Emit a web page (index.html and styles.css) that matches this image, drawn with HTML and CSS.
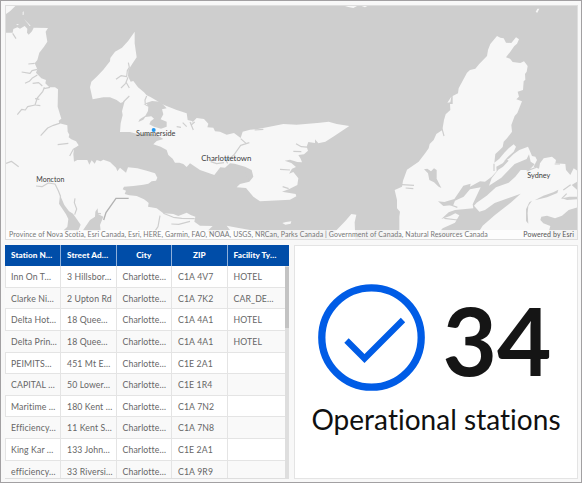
FILE: index.html
```html
<!DOCTYPE html>
<html lang="en">
<head>
<meta charset="utf-8">
<title>Operational stations</title>
<link rel="stylesheet" href="styles.css">
</head>
<body>
<main class="dashboard">
  <section class="map">
    <svg class="basemap" viewBox="18 18 1713 699" preserveAspectRatio="none">
      <g class="land">
        <path d="M18 18H46L30 34L18 42ZM68 36L71 34L71 44L68 45ZM48 73L56 72L54 76ZM72 57L92 77L89 78Z"/>
        <path d="M18 98L38 98L40 87L52 82L60 86L74 78L82 86L81 98L86 104L96 94L101 83L144 84L137 95L142 125L132 140L118 158L112 180L104 190L112 208L108 218L124 235L138 240L136 250L148 262L165 262L174 268L173 320L184 356L176 362L178 370L202 376L203 395L208 404L206 412L214 418L228 424L236 436L222 448L220 462L222 485L232 480L262 480L268 494L275 481L284 491L290 480L302 484L310 479L330 486L348 503L352 514L360 503L378 518L384 502L412 505L440 512L465 520L472 533L468 542L455 544L445 551L430 554L400 558L372 560L368 568L378 572L374 582L388 586L410 588L432 598L440 604L446 609L444 620L470 625L490 640L520 642L535 648L560 638L572 645L586 650L583 665L600 677L638 678L620 695L650 705L690 690L680 677L712 683L750 690L790 706L790 717H18Z"/>
        <path d="M404 95L404 130L410 172L398 190L385 210L384 228L392 245L400 243L414 262L432 277L440 286L450 290L492 315L530 330L560 340L563 360L578 364L572 373L590 354L612 357L625 371L622 382L640 383L645 394L660 395L680 404L702 399L722 414L728 395L750 389L770 388L820 378L850 372L890 374L960 368L986 365L1010 372L1048 378L1030 390L1003 408L976 425L955 430L945 418L945 429L925 426L920 440L924 452L912 463L895 465L902 476L906 487L892 486L870 479L854 482L874 489L888 501L876 506L867 521L880 516L895 535L892 555L868 567L846 575L887 582L889 589L870 599L780 604L760 590L738 564L710 562L720 552L748 545L760 530L755 510L735 500L704 491L690 490L675 503L661 502L647 520L643 525L600 510L570 490L560 501L550 492L538 488L525 488L518 476L505 465L500 450L482 440L460 433L470 423L490 417L470 405L440 400L415 403L390 396L360 396L362 370L368 345L366 334L374 304L362 309L350 300L330 292L310 292L278 298L270 262L274 245L290 230L310 209L330 184L331 174L345 155L366 143L385 122Z"/>
        <path d="M1491 108L1501 113L1511 115L1518 128L1534 129L1548 112L1557 118L1551 131L1543 138L1531 155L1518 172L1530 176L1538 186L1561 189L1572 184L1583 198L1580 215L1575 222L1576 239L1571 244L1569 270L1553 275L1557 290L1549 298L1566 304L1552 339L1544 348L1534 375L1536 395L1521 415L1511 425L1508 441L1499 450L1486 462L1483 488L1498 476L1513 458L1526 445L1541 433L1548 440L1541 455L1524 470L1511 485L1528 475L1541 462L1558 450L1584 440L1590 454L1596 468L1606 470L1611 480L1601 500L1617 506L1620 490L1631 475L1656 470L1668 480L1666 490L1696 492L1698 510L1711 525L1721 505L1732 512L1732 545L1715 555L1732 570L1732 590L1708 590L1686 595L1701 600L1732 598L1732 622L1706 630L1686 647L1665 655L1641 647L1624 650L1621 660L1630 670L1651 678L1640 717H1206L1198 690L1198 650L1200 635L1191 625L1191 600L1184 570L1206 560L1209 542L1221 509L1256 485L1276 459L1286 445L1289 432L1301 420L1309 402L1327 390L1332 360L1337 343L1351 330L1350 312L1358 312L1358 288L1374 280L1376 265L1401 218L1410 210L1426 206L1437 193L1461 168L1464 150L1471 132Z"/>
        <path d="M1342 308L1354 290L1351 307ZM1607 36L1612 26L1618 26L1612 38ZM1035 18H1071L1060 24L1045 21ZM1085 18H1102L1095 22ZM847 669L856 674L872 671L874 664L858 666ZM1010 690L1036 663L1054 642L1069 644L1064 667L1066 717H990Z"/>
      </g>
      <g class="water">
        <path d="M436 310L456 303L481 305L500 325L486 328L490 343L482 358L500 365L500 380L483 386L462 380L448 373L452 364L462 356L454 349L436 351L430 359L415 366L419 358L436 347L444 333L445 320L430 313L444 316Z"/>
        <path d="M180 585L177 611L198 643L205 657L202 680L188 694L234 694L242 674L228 654L219 641L207 634L193 615ZM248 692L270 660L285 650L286 635L293 625L294 642L310 650L300 675L302 692Z"/>
        <path d="M1272 508L1282 506L1293 514L1302 505L1310 510L1310 536L1324 564L1316 560L1302 547L1288 540L1284 520Z"/>
        <path d="M1314 604L1333 606L1363 597L1390 557L1412 551L1410 560L1440 544L1455 545L1475 530L1490 514L1489 500L1508 490L1519 478L1526 482L1509 500L1495 509L1475 535L1467 557L1504 533L1544 492L1580 477L1587 463L1592 485L1604 493L1588 510L1562 510L1546 530L1526 548L1488 562L1460 587L1430 608L1422 617L1438 635L1455 630L1484 609L1562 581L1532 608L1484 646L1448 677L1440 690L1300 717L1328 685L1365 668L1378 646L1366 640L1350 648L1324 657L1346 637L1365 630L1420 625L1418 613L1442 562L1410 568L1391 590L1365 602L1360 615L1330 618Z"/>
        <path d="M1596 602L1585 618L1583 640L1585 671L1578 663L1578 628L1588 607Z"/>
        <path d="M1604 601L1630 587L1660 577L1675 569L1672 579L1641 592Z"/>
      </g>
      <g class="river">
        <path d="M133 262L128 275L112 294L105 315L83 320L76 330L65 328L52 344M132 266L150 262M127 258L116 248L98 250M105 296L118 298M106 315L121 317M112 208L96 212L90 220L65 216M112 225L96 235L88 244L75 250M104 190L85 192M38 100L48 116"/>
        <path d="M183 362L178 370L160 376L143 384L122 407M205 430L173 434M234 440L220 448L209 468M108 558L126 560L145 549L165 552L175 572L182 590M225 595L223 608L230 627L224 644M18 490L34 484L56 500M289 640L303 641M480 647L474 680L466 692"/>
        <path d="M385 188L388 202L382 212L380 230L363 227L348 238M384 232L377 250L363 264M378 246L388 264M370 306L388 288M440 288L435 300L436 315M584 366L575 374M530 380L543 382M548 368L560 380M570 366L580 390"/>
        <path d="M490 640L520 652L545 655L584 656M514 672L536 673L570 664M748 428L722 436L703 463L684 480M738 430L722 416M677 480L683 490M790 388L764 390M738 506L736 530L748 540M848 560L866 566M930 442L904 440L888 431M904 455L880 454M870 510L840 508M632 485L650 491L672 488"/>
        <path d="M1326 386L1332 408M1206 554L1242 556M1217 564L1240 566M1372 622L1345 612M1333 655L1373 660M1482 491L1482 513M1690 570L1712 554M1617 478L1606 503L1580 513M1664 492L1680 492M1685 596L1700 581"/>
      </g>
      <path class="causeway" d="M311 660L318 638L348 595H386"/>
      <circle class="station" cx="461" cy="390" r="6"/>
      <circle class="station faint" cx="680" cy="478" r="5"/>
      <g class="place">
        <text x="408" y="408" textLength="118" lengthAdjust="spacingAndGlyphs">Summerside</text>
        <text x="604" y="484" textLength="150" lengthAdjust="spacingAndGlyphs" class="city">Charlottetown</text>
        <text x="109" y="547" textLength="84" lengthAdjust="spacingAndGlyphs">Moncton</text>
        <text x="1582" y="535" textLength="69" lengthAdjust="spacingAndGlyphs">Sydney</text>
      </g>
    </svg>
    <div class="attribution">
      <span class="sources">Province of Nova Scotia, Esri Canada, Esri, HERE, Garmin, FAO, NOAA, USGS, NRCan, Parks Canada | Government of Canada, Natural Resources Canada</span>
      <span class="powered">Powered by Esri</span>
    </div>
  </section>
  <section class="panels">
    <div class="stations">
      <div class="row head"><span>Station N…</span><span>Street Ad…</span><span class="mid">City</span><span class="mid">ZIP</span><span>Facility Ty…</span></div>
      <div class="scroller">
        <div class="rows">
          <div class="row"><span>Inn On T…</span><span>3 Hillsbor…</span><span>Charlotte…</span><span>C1A 4V7</span><span>HOTEL</span></div>
          <div class="row"><span>Clarke Ni…</span><span>2 Upton Rd</span><span>Charlotte…</span><span>C1A 7K2</span><span>CAR_DE…</span></div>
          <div class="row"><span>Delta Hot…</span><span>18 Quee…</span><span>Charlotte…</span><span>C1A 4A1</span><span>HOTEL</span></div>
          <div class="row"><span>Delta Prin…</span><span>18 Quee…</span><span>Charlotte…</span><span>C1A 4A1</span><span>HOTEL</span></div>
          <div class="row"><span>PEIMITS…</span><span>451 Mt E…</span><span>Charlotte…</span><span>C1E 2A1</span><span></span></div>
          <div class="row"><span>CAPITAL …</span><span>50 Lower…</span><span>Charlotte…</span><span>C1E 1R4</span><span></span></div>
          <div class="row"><span>Maritime …</span><span>180 Kent …</span><span>Charlotte…</span><span>C1A 7N2</span><span></span></div>
          <div class="row"><span>Efficiency…</span><span>11 Kent S…</span><span>Charlotte…</span><span>C1A 7N8</span><span></span></div>
          <div class="row"><span>King Kar …</span><span>133 John…</span><span>Charlotte…</span><span>C1E 2A1</span><span></span></div>
          <div class="row"><span>efficiency…</span><span>33 Riversi…</span><span>Charlotte…</span><span>C1A 9R9</span><span></span></div>
        </div>
        <div class="track"><div class="thumb"></div></div>
      </div>
    </div>
    <div class="indicator">
      <div class="figure">
        <svg class="check" viewBox="0 0 107 107"><circle cx="53.5" cy="53.5" r="49.7"/><path d="M28.5 56.5L46.5 74.5L85 36"/></svg>
        <span class="count">34</span>
      </div>
      <div class="caption">Operational stations</div>
    </div>
  </section>
</main>
</body>
</html>
```

FILE: styles.css
```css
* { box-sizing: border-box; }
body { margin: 0; font-family: Lato, sans-serif; font-variant-ligatures: none; }
.dashboard {
  width: 582px; height: 483px; padding: 4px 3px 3px 4px;
  border: 1px solid #a2a0a2; background: #f8f8f8;
  display: flex; flex-direction: column; gap: 5px; overflow: hidden;
}
.map {
  position: relative; flex: none; height: 235px;
  border: 1px solid #dedede; background: #cecece; overflow: hidden;
}
.basemap { display: block; width: 571px; height: 233px; }
.land { fill: #f7f7f7; }
.water { fill: #cecece; }
.river { fill: none; stroke: #cecece; stroke-width: 3.5; stroke-linejoin: round; }
.causeway { fill: none; stroke: #b2b2b2; stroke-width: 4; }
.station { fill: #2497ed; }
.faint { opacity: .35; }
.place { font-size: 22px; fill: #3c3c3c; }
.place .city { font-size: 24px; }
.attribution {
  position: absolute; left: 0; right: 0; bottom: 0; height: 9px;
  display: flex; justify-content: space-between; padding: 0 3px;
  background: rgba(255, 255, 255, .75);
  color: #777; font-size: 7px; line-height: 9px; white-space: nowrap;
}
.sources { letter-spacing: .09px; }
.powered { color: #555; letter-spacing: .1px; }
.panels { flex: 1; min-height: 0; display: flex; gap: 5px; }
.stations {
  width: 284px; height: 234px; display: flex; flex-direction: column;
  overflow: hidden; background: #fff; border-bottom: 1px solid #dedede;
}
.row {
  display: grid; grid-template-columns: 56px 55.5px 55.5px 55.5px 1fr;
  flex: none; height: 21.65px; line-height: 21.5px;
  border-bottom: 1px solid #e4e4e4; color: #666; font-size: 8.7px; letter-spacing: .13px; white-space: nowrap;
}
.row span { padding-left: 6px; border-right: 1px solid #e4e4e4; }
.row span:last-child { border-right: 0; }
.row:nth-child(even) { background: #f9f9f9; }
.row.head {
  height: 21px; line-height: 20px; background: #004da8; color: #fff; font-weight: 900;
  font-size: 8.2px; letter-spacing: .05px; border-bottom: 0;
}
.row.head span { border-color: #8fb0da; }
.row.head span:last-child { border: 0; }
.row.head .mid { padding: 0; text-align: center; }
.scroller { flex: 1; min-height: 0; display: flex; border-left: 1px solid #e4e4e4; }
.rows { flex: 1; margin-left: -1px; }
.track { width: 4px; background: #dedede; padding-top: 1px; }
.thumb { height: 61px; background: #c3c3c3; }
.indicator {
  flex: 1; height: 234px; background: #fff; border: 1px solid #e4e4e4;
  display: flex; flex-direction: column; align-items: center; padding-top: 38px;
}
.figure { display: flex; align-items: center; height: 107px; gap: 17px; margin-right: 2px; }
.check { width: 107px; height: 107px; flex: none; }
.check circle { fill: none; stroke: #005ce6; stroke-width: 7.3; }
.check path { fill: none; stroke: #005ce6; stroke-width: 6.2; }
.count { color: #151515; font-size: 94px; font-weight: 700; line-height: 107px; padding-top: 3px; }
.caption { margin-top: 10px; color: #101010; font-size: 28px; line-height: 36px; letter-spacing: .03px; white-space: nowrap; }
```
